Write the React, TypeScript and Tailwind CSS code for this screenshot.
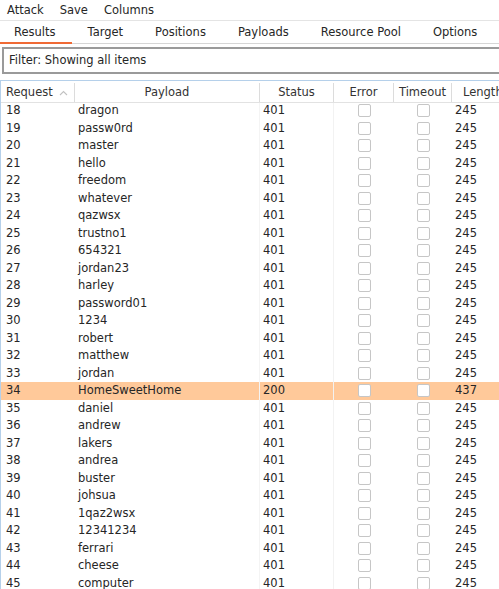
import React from 'react';

type Row = { id: number; payload: string; status: number; length: number };

const PAYLOADS = [
  'dragon', 'passw0rd', 'master', 'hello', 'freedom', 'whatever', 'qazwsx', 'trustno1',
  '654321', 'jordan23', 'harley', 'password01', '1234', 'robert', 'matthew', 'jordan',
  'HomeSweetHome', 'daniel', 'andrew', 'lakers', 'andrea', 'buster', 'johsua', '1qaz2wsx',
  '12341234', 'ferrari', 'cheese', 'computer',
];

const ROWS: Row[] = PAYLOADS.map((p, i) => ({
  id: 18 + i,
  payload: p,
  status: p === 'HomeSweetHome' ? 200 : 401,
  length: p === 'HomeSweetHome' ? 437 : 245,
}));

const TABS = ['Results', 'Target', 'Positions', 'Payloads', 'Resource Pool', 'Options'];

const cols = 'grid grid-cols-[74px_185px_74px_60px_58px_80px]';

const Checkbox = () => (
  <div className="w-[13px] h-[13px] rounded-[2px] border border-[#c6c6c6] bg-white" />
);

export default function App() {
  return (
    <div
      className="w-[499px] h-[589px] overflow-hidden bg-white text-[11.5px] text-[#262626]"
      style={{ fontFamily: '"DejaVu Sans", sans-serif' }}
    >
      {/* menu bar */}
      <div className="h-[21px] flex items-center gap-[16px] px-[7px] pt-[2px] border-b border-[#e4e4e4]">
        <span>Attack</span>
        <span>Save</span>
        <span>Columns</span>
      </div>

      {/* tabs */}
      <div className="h-[23px] flex border-b border-[#d6d6d6]">
        {TABS.map((t, i) => (
          <div
            key={t}
            className={
              'px-[16px] pt-[2px] flex items-center whitespace-nowrap ' +
              (i === 0 ? 'pl-[14px] border-b-2 border-[#f06a35] -mb-px' : '')
            }
          >
            {t}
          </div>
        ))}
      </div>

      {/* filter */}
      <div className="pl-[2px] mt-[3px]">
        <div className="h-[27px] flex items-center pl-[5px] pt-[1px] border-2 border-r-0 border-[#9a9a9a]">
          Filter: Showing all items
        </div>
      </div>

      {/* table */}
      <div className="mt-[6px] w-[560px] border-t border-l border-[#b5d0ea]">
        <div className={cols + ' h-[22px] pt-[2px] border-b border-[#e2e2e2] text-[#333]'}>
          <div className="flex items-center pl-[5px] gap-[6px] border-r border-[#dcdcdc]">
            Request
            <svg width="9" height="6" viewBox="0 0 9 6" fill="none">
              <path d="M1 5 L4.5 1.5 L8 5" stroke="#c2c2c2" strokeWidth="1.1" />
            </svg>
          </div>
          <div className="flex items-center justify-center border-r border-[#dcdcdc]">Payload</div>
          <div className="flex items-center justify-center border-r border-[#dcdcdc]">Status</div>
          <div className="flex items-center justify-center border-r border-[#dcdcdc]">Error</div>
          <div className="flex items-center justify-center border-r border-[#dcdcdc]">Timeout</div>
          <div className="flex items-center pl-[11px]">Length</div>
        </div>
        <div className="h-[500px] overflow-hidden">
          <div className="-mt-[1px]">
            {ROWS.map((r) => (
              <div
                key={r.id}
                className={cols + ' h-[17.5px] ' + (r.status === 200 ? 'bg-[#ffc99a]' : '')}
              >
                <div className="flex items-center pl-[5px]">{r.id}</div>
                <div className="flex items-center pl-[3px] border-r border-[#f4f4f4]">{r.payload}</div>
                <div className="flex items-center pl-[3px] border-r border-[#f2f2f2]">{r.status}</div>
                <div className="flex items-center justify-center">
                  <Checkbox />
                </div>
                <div className="flex items-center justify-center">
                  <Checkbox />
                </div>
                <div className="flex items-center pl-[3px]">{r.length}</div>
              </div>
            ))}
          </div>
        </div>
      </div>
    </div>
  );
}
